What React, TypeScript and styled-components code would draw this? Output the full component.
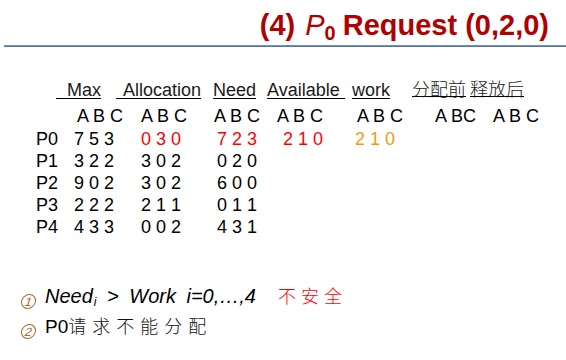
import React from "react";
import styled, { createGlobalStyle } from "styled-components";

const GlobalStyle = createGlobalStyle`
  html, body {
    margin: 0;
    padding: 0;
    background: #ffffff;
  }
  body {
    font-family: "Liberation Sans", Arial, sans-serif;
    color: #000000;
  }
`;

const Page = styled.div`
  width: 566px;
  height: 360px;
  overflow: hidden;
  display: flex;
  flex-direction: column;
`;

const TitleBar = styled.div`
  display: flex;
  justify-content: flex-end;
  padding: 11px 17px 0 0;
  height: 34px;
`;

const Title = styled.h1`
  margin: 0;
  font-size: 29px;
  line-height: 29px;
  font-weight: 700;
  color: #b00000;
  white-space: pre;
`;

const TitleP = styled.span`
  font-weight: 400;
  font-style: italic;
  margin-left: 10px;
`;

const TitleSub = styled.sub`
  font-size: 20px;
  font-weight: 700;
  vertical-align: -5px;
  margin-right: 7px;
`;

const Rule = styled.div`
  margin-left: 4px;
  height: 2px;
  background: linear-gradient(#7d9ac2, #4a6d9f);
`;

const Table = styled.div`
  margin-top: 32px;
  padding-left: 36px;
  display: grid;
  grid-template-columns: 20px 60px 95px 54px 85px 60px 59px 97px;
  grid-auto-rows: 22px;
  grid-template-rows: 26px 23px;
  font-size: 18px;
  line-height: 22px;
  white-space: pre;
`;

const Cell = styled.div<{ $indent?: number; $color?: string }>`
  padding-left: ${({ $indent }) => $indent ?? 0}px;
  color: ${({ $color }) => $color ?? "#000000"};
`;

const Heading = styled.span<{ $pad?: number; $padRight?: number; $cjk?: boolean }>`
  display: inline-block;
  line-height: 16px;
  padding-left: ${({ $pad }) => $pad ?? 0}px;
  padding-right: ${({ $padRight }) => $padRight ?? 0}px;
  border-bottom: 1px solid #000000;
  font-family: ${({ $cjk }) =>
    $cjk ? '"Noto Sans CJK SC", sans-serif' : '"Liberation Sans", Arial, sans-serif'};
  font-size: 18px;
  font-weight: ${({ $cjk }) => ($cjk ? 300 : 400)};
  color: #1a1a1a;
`;

const Notes = styled.div`
  margin-top: 46px;
  padding-left: 21px;
  display: flex;
  flex-direction: column;
`;

const NoteLine = styled.div`
  display: flex;
  align-items: baseline;
  height: 30px;
  font-size: 19px;
  line-height: 22px;
  white-space: pre;
`;

const CircleNum = styled.span`
  display: inline-flex;
  align-items: center;
  justify-content: center;
  box-sizing: border-box;
  width: 15px;
  height: 15px;
  margin-right: 9px;
  border: 1.3px solid #b0642e;
  border-radius: 50%;
  color: #b0642e;
  font-size: 12px;
  line-height: 12px;
  font-style: italic;
  transform: translateY(2px) skewX(-8deg);
`;

const Formula = styled.span`
  font-style: italic;
  font-size: 20px;
  word-spacing: 5px;
`;

const Sub = styled.sub`
  font-size: 12px;
  vertical-align: -3px;
  margin-left: 1px;
`;

const Cjk = styled.span<{ $color?: string; $gap?: number; $spacing?: number }>`
  font-family: "Noto Sans CJK SC", sans-serif;
  font-size: 18px;
  font-weight: 300;
  margin-left: ${({ $gap }) => $gap ?? 0}px;
  letter-spacing: ${({ $spacing }) => $spacing ?? 4}px;
  color: ${({ $color }) => $color ?? "#111111"};
`;

const RED = "#ff0000";
const ORANGE = "#f39a12";

type Row = {
  name: string;
  max: string;
  alloc: string;
  need: string;
  avail?: string;
  work?: string;
  hot?: boolean;
};

const rows: Row[] = [
  { name: "P0", max: "7 5 3", alloc: "0 3 0", need: "7 2 3", avail: "2 1 0", work: "2 1 0", hot: true },
  { name: "P1", max: "3 2 2", alloc: "3 0 2", need: "0 2 0" },
  { name: "P2", max: "9 0 2", alloc: "3 0 2", need: "6 0 0" },
  { name: "P3", max: "2 2 2", alloc: "2 1 1", need: "0 1 1" },
  { name: "P4", max: "4 3 3", alloc: "0 0 2", need: "4 3 1" },
];

export default function App() {
  return (
    <Page>
      <GlobalStyle />
      <TitleBar>
        <Title>
          (4)
          <TitleP>P</TitleP>
          <TitleSub>0</TitleSub>
          Request (0,2,0)
        </Title>
      </TitleBar>
      <Rule />

      <Table>
        <Cell />
        <Cell>
          <Heading $pad={11}>Max</Heading>
        </Cell>
        <Cell>
          <Heading $pad={7}>Allocation</Heading>
        </Cell>
        <Cell $indent={2}>
          <Heading>Need</Heading>
        </Cell>
        <Cell $indent={2}>
          <Heading $padRight={5}>Available</Heading>
        </Cell>
        <Cell $indent={2}>
          <Heading>work</Heading>
        </Cell>
        <Cell $indent={2}>
          <Heading $cjk>分配前</Heading>
        </Cell>
        <Cell $indent={1}>
          <Heading $cjk>释放后</Heading>
        </Cell>

        <Cell />
        <Cell $indent={21}>A B C</Cell>
        <Cell $indent={25}>A B C</Cell>
        <Cell $indent={3}>A B C</Cell>
        <Cell $indent={12}>A B C</Cell>
        <Cell $indent={7}>A B C</Cell>
        <Cell $indent={25}>A BC</Cell>
        <Cell $indent={24}>A B C</Cell>

        {rows.map((r) => (
          <React.Fragment key={r.name}>
            <Cell>{r.name}</Cell>
            <Cell $indent={18}>{r.max}</Cell>
            <Cell $indent={25} $color={r.hot ? RED : undefined}>
              {r.alloc}
            </Cell>
            <Cell $indent={6} $color={r.hot ? RED : undefined}>
              {r.need}
            </Cell>
            <Cell $indent={18} $color={RED}>
              {r.avail ?? ""}
            </Cell>
            <Cell $indent={5} $color={ORANGE}>
              {r.work ?? ""}
            </Cell>
            <Cell />
            <Cell />
          </React.Fragment>
        ))}
      </Table>

      <Notes>
        <NoteLine>
          <CircleNum>1</CircleNum>
          <Formula>
            Need<Sub>i</Sub> &gt; Work i=0,…,4
          </Formula>
          <Cjk $color={RED} $gap={22} $spacing={5}>
            不安全
          </Cjk>
        </NoteLine>
        <NoteLine>
          <CircleNum>2</CircleNum>
          <span>P0</span>
          <Cjk $spacing={6}>请求不能分配</Cjk>
        </NoteLine>
      </Notes>
    </Page>
  );
}
